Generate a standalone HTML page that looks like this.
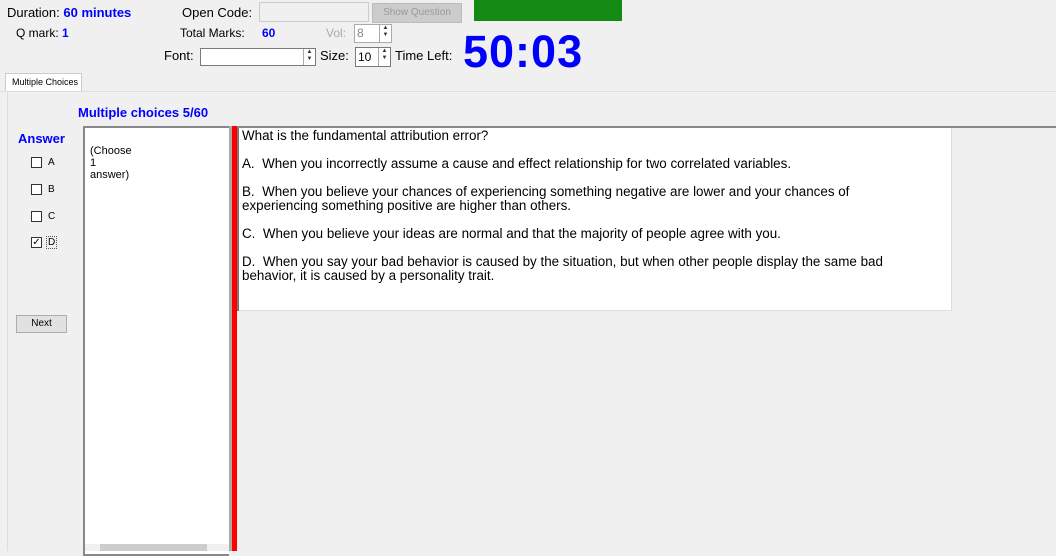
<!DOCTYPE html>
<html><head><style>
body{margin:0;width:1056px;height:551px;background:#f0f0f0;font-family:"Liberation Sans",Arial,sans-serif;font-size:12px;color:#000;position:relative;overflow:hidden}
.a{position:absolute;white-space:nowrap}
.b{color:#0000ff;font-weight:bold}
.inp{position:absolute;background:#fff;border:1px solid #7a7a7a;box-sizing:border-box}
.spin{position:absolute;right:0;top:0;width:11px;height:100%;border-left:1px solid #aaa;font-size:6px;line-height:7px;text-align:center;color:#333}
.cb{position:absolute;width:11px;height:11px;border:1px solid #333;background:#fff;box-sizing:border-box}
.q p{margin:0 0 14px 0}
</style></head><body>
<div class="a" style="left:7px;top:5px;font-size:13px">Duration: <span class="b">60 minutes</span></div>
<div class="a" style="left:16px;top:26px">Q mark: <span class="b">1</span></div>
<div class="a" style="left:182px;top:5px;font-size:13px">Open Code:</div>
<div class="inp" style="left:259px;top:2px;width:110px;height:20px;border-color:#ccc;background:#f0f0f0"></div>
<div class="a" style="left:372px;top:3px;width:88px;height:18px;background:#ccc;border:1px solid #bbb;color:#999;font-size:10px;text-align:center;line-height:18px">Show Question</div>
<div class="a" style="left:474px;top:0;width:148px;height:21px;background:#138a13"></div>
<div class="a" style="left:180px;top:26px">Total Marks:</div>
<div class="a b" style="left:262px;top:26px">60</div>
<div class="a" style="left:326px;top:26px;color:#aaa">Vol:</div>
<div class="inp" style="left:354px;top:24px;width:38px;height:19px;border-color:#aaa;color:#888;padding-left:2px;line-height:17px">8<div class="spin">▲<br>▼</div></div>
<div class="a" style="left:164px;top:48px;font-size:13px">Font:</div>
<div class="inp" style="left:200px;top:48px;width:116px;height:18px"><div class="spin">▲<br>▼</div></div>
<div class="a" style="left:320px;top:48px;font-size:13px">Size:</div>
<div class="inp" style="left:355px;top:47px;width:36px;height:20px;padding-left:2px;line-height:18px">10<div class="spin">▲<br>▼</div></div>
<div class="a" style="left:395px;top:48px;font-size:13px">Time Left:</div>
<div class="a" style="left:463px;top:26px;font-size:45px;font-weight:bold;color:#0000ff;letter-spacing:1px">50:03</div>
<div class="a" style="left:5px;top:73px;width:69px;height:18px;background:#fff;border:1px solid #ccc;border-bottom:none;font-size:9px;line-height:17px;padding-left:6px">Multiple Choices</div>
<div class="a" style="left:0;top:91px;width:1056px;height:1px;background:#ddd"></div>
<div class="a" style="left:7px;top:91px;width:1px;height:460px;background:#ddd"></div>
<div class="a b" style="left:78px;top:105px;font-size:13px">Multiple choices 5/60</div>
<div class="a b" style="left:18px;top:131px;font-size:13px">Answer</div>
<div class="cb" style="left:31px;top:157px"></div><div class="a" style="left:48px;top:157px;font-size:10px">A</div>
<div class="cb" style="left:31px;top:184px"></div><div class="a" style="left:48px;top:184px;font-size:10px">B</div>
<div class="cb" style="left:31px;top:211px"></div><div class="a" style="left:48px;top:211px;font-size:10px">C</div>
<div class="cb" style="left:31px;top:237px;font-size:10px;line-height:9px;text-align:center">✓</div><div class="a" style="left:46px;top:236px;font-size:10px;border:1px dotted #555;padding:0 1px">D</div>
<div class="a" style="left:16px;top:315px;width:49px;height:16px;background:#e1e1e1;border:1px solid #adadad;font-size:10px;text-align:center;line-height:16px">Next</div>
<div class="a" style="left:83px;top:126px;width:146px;height:430px;background:#fff;border:2px solid #888;border-right:none;box-sizing:border-box"></div>
<div class="a" style="left:90px;top:145px;font-size:11px;line-height:12px">(Choose<br>1<br>answer)</div>
<div class="a" style="left:85px;top:544px;width:144px;height:7px;background:#f0f0f0"></div>
<div class="a" style="left:100px;top:544px;width:107px;height:7px;background:#cdcdcd"></div>
<div class="a" style="left:229px;top:126px;width:3px;height:425px;background:#aaa"></div>
<div class="a" style="left:232px;top:126px;width:5px;height:425px;background:#ff0000"></div>
<div class="a" style="left:237px;top:126px;width:819px;height:2px;background:#888"></div>
<div class="a" style="left:237px;top:128px;width:2px;height:183px;background:#777"></div>
<div class="a q" style="left:239px;top:128px;width:713px;height:183px;background:#fff;border-right:1px solid #ddd;border-bottom:1px solid #ddd;box-sizing:border-box;padding:1px 30px 2px 3px;font-size:13.4px;line-height:14px;white-space:normal">
<p>What is the fundamental attribution error?</p>
<p>A.&nbsp; When you incorrectly assume a cause and effect relationship for two correlated variables.</p>
<p>B.&nbsp; When you believe your chances of experiencing something negative are lower and your chances of<br>experiencing something positive are higher than others.</p>
<p>C.&nbsp; When you believe your ideas are normal and that the majority of people agree with you.</p>
<p>D.&nbsp; When you say your bad behavior is caused by the situation, but when other people display the same bad<br>behavior, it is caused by a personality trait.</p>
</div>
</body></html>
